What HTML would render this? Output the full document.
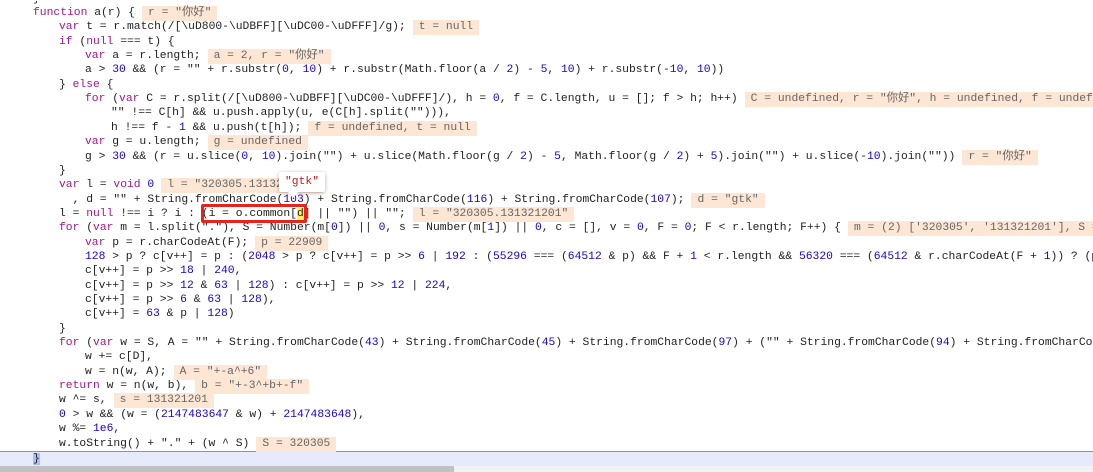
<!DOCTYPE html>
<html><head><meta charset="utf-8"><style>
html,body{margin:0;width:1093px;height:472px;overflow:hidden}
body{background:#fff;position:relative;font-family:"Liberation Mono","Noto Sans CJK SC",monospace;font-size:11.33px;color:#222}
#w{position:absolute;left:0;top:1px;width:1093px;height:470px;overflow:hidden}
.l{position:absolute;left:0;height:14.35px;line-height:14.35px;white-space:pre}
.k{color:#a0178f}.n{color:#1c00cf}
.a{background:#fde6d3;color:#666;margin-left:7px;padding:0 6px;display:inline-block;line-height:15px}
</style></head><body>
<div style="position:absolute;left:0;top:451px;width:1093px;height:15px;background:#e6eafb;border-top:1px solid #6f96e6"></div>
<div id="w">
<div class="l" style="top:-9.5px;left:33px">}</div>
<div class="l" style="top:5px;left:33px"><span class="k">function</span> a(r) {<span class="a">r = "你好"</span></div>
<div class="l" style="top:19.35px;left:59px"><span class="k">var</span> t = r.match(/[\uD800-\uDBFF][\uDC00-\uDFFF]/g);<span class="a">t = null</span></div>
<div class="l" style="top:33.7px;left:59px"><span class="k">if</span> (<span class="k">null</span> === t) {</div>
<div class="l" style="top:48.05px;left:85px"><span class="k">var</span> a = r.length;<span class="a">a = 2, r = "你好"</span></div>
<div class="l" style="top:62.4px;left:85px">a &gt; <span class="n">30</span> &amp;&amp; (r = "" + r.substr(<span class="n">0</span>, <span class="n">10</span>) + r.substr(Math.floor(a / <span class="n">2</span>) - <span class="n">5</span>, <span class="n">10</span>) + r.substr(-<span class="n">10</span>, <span class="n">10</span>))</div>
<div class="l" style="top:76.75px;left:59px">} <span class="k">else</span> {</div>
<div class="l" style="top:91.1px;left:85px"><span class="k">for</span> (<span class="k">var</span> C = r.split(/[\uD800-\uDBFF][\uDC00-\uDFFF]/), h = <span class="n">0</span>, f = C.length, u = []; f &gt; h; h++)<span class="a">C = undefined, r = "你好", h = undefined, f = undefined</span></div>
<div class="l" style="top:105.45px;left:111px">"" !== C[h] &amp;&amp; u.push.apply(u, e(C[h].split(""))),</div>
<div class="l" style="top:119.8px;left:111px">h !== f - <span class="n">1</span> &amp;&amp; u.push(t[h]);<span class="a">f = undefined, t = null</span></div>
<div class="l" style="top:134.15px;left:85px"><span class="k">var</span> g = u.length;<span class="a">g = undefined</span></div>
<div class="l" style="top:148.5px;left:85px">g &gt; <span class="n">30</span> &amp;&amp; (r = u.slice(<span class="n">0</span>, <span class="n">10</span>).join("") + u.slice(Math.floor(g / <span class="n">2</span>) - <span class="n">5</span>, Math.floor(g / <span class="n">2</span>) + <span class="n">5</span>).join("") + u.slice(-<span class="n">10</span>).join(""))<span class="a">r = "你好"</span></div>
<div class="l" style="top:162.85px;left:59px">}</div>
<div class="l" style="top:177.2px;left:59px"><span class="k">var</span> l = <span class="k">void</span> <span class="n">0</span><span class="a">l = "320305.131321201"</span></div>
<div class="l" style="top:191.55px;left:59px">  , d = "" + String.fromCharCode(<span class="n">103</span>) + String.fromCharCode(<span class="n">116</span>) + String.fromCharCode(<span class="n">107</span>);<span class="a">d = "gtk"</span></div>
<div class="l" style="top:205.9px;left:59px">l = <span class="k">null</span> !== i ? i : (i = o.common[<span style="background:#fff25a">d</span>] || "") || "";<span class="a">l = "320305.131321201"</span></div>
<div class="l" style="top:220.25px;left:59px"><span class="k">for</span> (<span class="k">var</span> m = l.split("."), S = Number(m[<span class="n">0</span>]) || <span class="n">0</span>, s = Number(m[<span class="n">1</span>]) || <span class="n">0</span>, c = [], v = <span class="n">0</span>, F = <span class="n">0</span>; F &lt; r.length; F++) {<span class="a">m = (2) ['320305', '131321201'], S = 320305</span></div>
<div class="l" style="top:234.6px;left:85px"><span class="k">var</span> p = r.charCodeAt(F);<span class="a">p = 22909</span></div>
<div class="l" style="top:248.95px;left:85px"><span class="n">128</span> &gt; p ? c[v++] = p : (<span class="n">2048</span> &gt; p ? c[v++] = p &gt;&gt; <span class="n">6</span> | <span class="n">192</span> : (<span class="n">55296</span> === (<span class="n">64512</span> &amp; p) &amp;&amp; F + <span class="n">1</span> &lt; r.length &amp;&amp; <span class="n">56320</span> === (<span class="n">64512</span> &amp; r.charCodeAt(F + <span class="n">1</span>)) ? (p = <span class="n">65536</span></div>
<div class="l" style="top:263.3px;left:85px">c[v++] = p &gt;&gt; <span class="n">18</span> | <span class="n">240</span>,</div>
<div class="l" style="top:277.65px;left:85px">c[v++] = p &gt;&gt; <span class="n">12</span> &amp; <span class="n">63</span> | <span class="n">128</span>) : c[v++] = p &gt;&gt; <span class="n">12</span> | <span class="n">224</span>,</div>
<div class="l" style="top:292px;left:85px">c[v++] = p &gt;&gt; <span class="n">6</span> &amp; <span class="n">63</span> | <span class="n">128</span>),</div>
<div class="l" style="top:306.35px;left:85px">c[v++] = <span class="n">63</span> &amp; p | <span class="n">128</span>)</div>
<div class="l" style="top:320.7px;left:59px">}</div>
<div class="l" style="top:335.05px;left:59px"><span class="k">for</span> (<span class="k">var</span> w = S, A = "" + String.fromCharCode(<span class="n">43</span>) + String.fromCharCode(<span class="n">45</span>) + String.fromCharCode(<span class="n">97</span>) + ("" + String.fromCharCode(<span class="n">94</span>) + String.fromCharCode(<span class="n">43</span>)</div>
<div class="l" style="top:349.4px;left:85px">w += c[D],</div>
<div class="l" style="top:363.75px;left:85px">w = n(w, A);<span class="a">A = "+-a^+6"</span></div>
<div class="l" style="top:378.1px;left:59px"><span class="k">return</span> w = n(w, b),<span class="a">b = "+-3^+b+-f"</span></div>
<div class="l" style="top:392.45px;left:59px">w ^= s,<span class="a">s = 131321201</span></div>
<div class="l" style="top:406.8px;left:59px"><span class="n">0</span> &gt; w &amp;&amp; (w = (<span class="n">2147483647</span> &amp; w) + <span class="n">2147483648</span>),</div>
<div class="l" style="top:421.15px;left:59px">w %= <span class="n">1e6</span>,</div>
<div class="l" style="top:435.5px;left:59px">w.toString() + "." + (w ^ S)<span class="a">S = 320305</span></div>
</div>
<div class="l" style="top:452px;left:33px"><span style="background:#a9bff2">}</span></div>
<div style="position:absolute;left:0;top:466px;width:1093px;height:6px;background:#f1f1f1"></div>
<div style="position:absolute;left:0;top:466px;width:454px;height:6px;background:#c1c1c1"></div>
<div style="position:absolute;left:279px;top:172px;width:46px;height:20px;background:#fff;box-shadow:0 1px 4px rgba(0,0,0,.3);border-radius:2px;color:#c41a16;font-size:11.33px;line-height:20px;text-align:center">"gtk"</div>
<div style="position:absolute;left:287px;top:191px;width:0;height:0;border-left:6px solid transparent;border-right:6px solid transparent;border-top:7px solid #fff"></div>
<div style="position:absolute;left:201px;top:204px;width:100px;height:13px;border:3px solid #e8231b;border-radius:2px"></div>
</body></html>
